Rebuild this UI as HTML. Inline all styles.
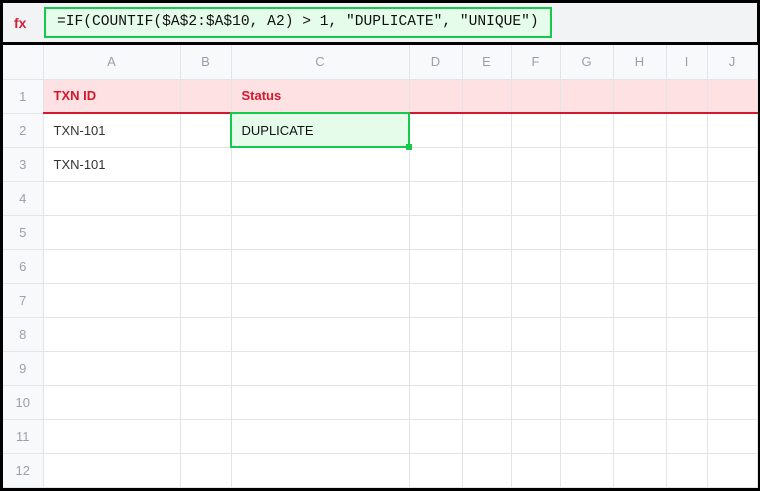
<!DOCTYPE html>
<html><head><style>
*{margin:0;padding:0;box-sizing:border-box}
body{width:760px;height:491px;background:#000;position:relative;overflow:hidden;font-family:"Liberation Sans",sans-serif}
#bar{position:absolute;left:3px;top:3px;width:754px;height:39px;background:#f2f3f5}
#fx{position:absolute;left:14px;top:15px;color:#d42035;font-weight:bold;font-size:14px}
#f{position:absolute;left:44px;top:7px;width:508px;height:31px;border:2px solid #14c94c;background:#e6fcea;font-family:"Liberation Mono",monospace;font-size:14.6px;color:#111;padding:5px 0 0 11px;white-space:pre}
table{position:absolute;left:3px;top:45px;border-collapse:collapse;table-layout:fixed;background:#fff}
td{height:34px;border-right:1px solid #e3e4e8;border-bottom:1px solid #e3e4e8;font-size:13px;color:#333;padding-left:10px;white-space:nowrap}
tr.h td{background:#f8f9fb;color:#9aa0aa;text-align:center;padding:0}
td.n{background:#f8f9fb;color:#9aa0aa;text-align:center;padding:0}
tr.r1 td{background:#fde1e3;border-bottom:2px solid #d5172e;color:#d5172e;font-weight:bold}
tr.r1 td.n{color:#9aa0aa;font-weight:normal;border-bottom:1px solid #e3e4e8;background:#f8f9fb}
td.sel{background:#e6fcea;outline:2px solid #14c94c;outline-offset:-1px;position:relative;color:#111}
.hd{position:absolute;right:-3px;bottom:-3px;width:6px;height:6px;background:#14c94c}
</style></head><body>
<div id="bar"></div>
<div id="fx">fx</div>
<div id="f">=IF(COUNTIF($A$2:$A$10, A2) &gt; 1, "DUPLICATE", "UNIQUE")</div>
<table>
<colgroup><col style="width:40px"><col style="width:137px"><col style="width:51px"><col style="width:178px"><col style="width:53px"><col style="width:49px"><col style="width:49px"><col style="width:53px"><col style="width:53px"><col style="width:41px"><col style="width:50px"></colgroup>
<tr class="h"><td></td><td>A</td><td>B</td><td>C</td><td>D</td><td>E</td><td>F</td><td>G</td><td>H</td><td>I</td><td>J</td></tr>
<tr class="r1"><td class="n">1</td><td>TXN ID</td><td></td><td>Status</td><td></td><td></td><td></td><td></td><td></td><td></td><td></td></tr>
<tr><td class="n">2</td><td>TXN-101</td><td></td><td class="sel">DUPLICATE<div class="hd"></div></td><td></td><td></td><td></td><td></td><td></td><td></td><td></td></tr>
<tr><td class="n">3</td><td>TXN-101</td><td></td><td></td><td></td><td></td><td></td><td></td><td></td><td></td><td></td></tr>
<tr><td class="n">4</td><td></td><td></td><td></td><td></td><td></td><td></td><td></td><td></td><td></td><td></td></tr>
<tr><td class="n">5</td><td></td><td></td><td></td><td></td><td></td><td></td><td></td><td></td><td></td><td></td></tr>
<tr><td class="n">6</td><td></td><td></td><td></td><td></td><td></td><td></td><td></td><td></td><td></td><td></td></tr>
<tr><td class="n">7</td><td></td><td></td><td></td><td></td><td></td><td></td><td></td><td></td><td></td><td></td></tr>
<tr><td class="n">8</td><td></td><td></td><td></td><td></td><td></td><td></td><td></td><td></td><td></td><td></td></tr>
<tr><td class="n">9</td><td></td><td></td><td></td><td></td><td></td><td></td><td></td><td></td><td></td><td></td></tr>
<tr><td class="n">10</td><td></td><td></td><td></td><td></td><td></td><td></td><td></td><td></td><td></td><td></td></tr>
<tr><td class="n">11</td><td></td><td></td><td></td><td></td><td></td><td></td><td></td><td></td><td></td><td></td></tr>
<tr><td class="n">12</td><td></td><td></td><td></td><td></td><td></td><td></td><td></td><td></td><td></td><td></td></tr>
</table>
</body></html>
